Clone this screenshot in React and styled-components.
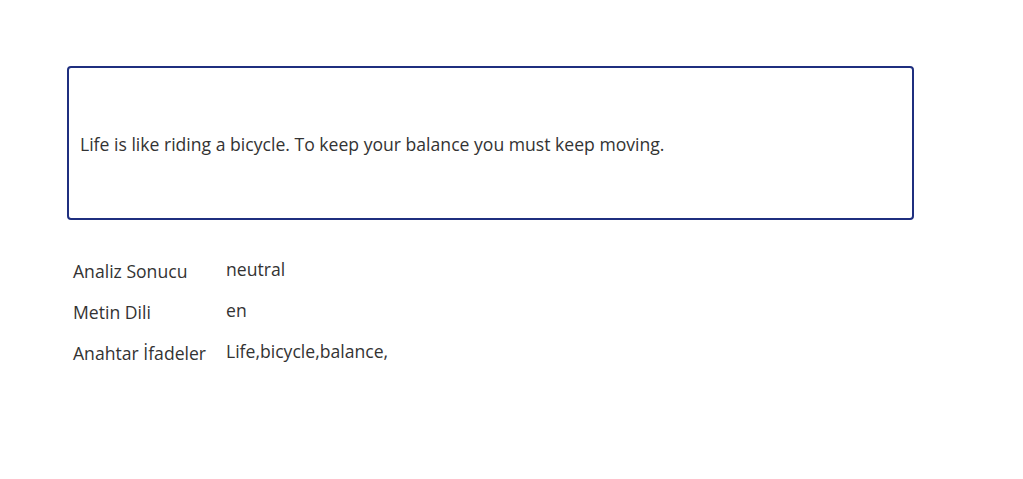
import React from 'react';
import styled, { createGlobalStyle } from 'styled-components';

const GlobalStyle = createGlobalStyle`
  body {
    margin: 0;
    background: #ffffff;
    font-family: "Open Sans", "Noto Sans", sans-serif;
    color: #333333;
  }
`;

const Page = styled.div`
  width: 1023px;
  height: 479px;
  padding: 66px 0 0 67px;
  box-sizing: border-box;
`;

const QuoteBox = styled.div`
  width: 847px;
  height: 154px;
  box-sizing: border-box;
  border: 2px solid #1f2f7f;
  border-radius: 4px;
  display: flex;
  align-items: center;
  padding: 2px 11px 0;
  font-size: 17.6px;
  color: #333333;
`;

const Results = styled.div`
  display: grid;
  grid-template-columns: 153px auto;
  row-gap: 17px;
  margin-top: 38px;
  padding-left: 6px;
  font-size: 17.6px;
  line-height: 24px;
`;

const Label = styled.div`
  color: #333333;
  position: relative;
  top: 1px;
`;

const Value = styled.div`
  color: #333333;
  position: relative;
  top: -1px;
`;

const rows = [
  ['Analiz Sonucu', 'neutral'],
  ['Metin Dili', 'en'],
  ['Anahtar İfadeler', 'Life,bicycle,balance,'],
];

const App = () => {
  return (
    <Page>
      <GlobalStyle />
      <QuoteBox>Life is like riding a bicycle. To keep your balance you must keep moving.</QuoteBox>
      <Results>
        {rows.map(([label, value]) => (
          <React.Fragment key={label}>
            <Label>{label}</Label>
            <Value>{value}</Value>
          </React.Fragment>
        ))}
      </Results>
    </Page>
  );
};

export default App;
